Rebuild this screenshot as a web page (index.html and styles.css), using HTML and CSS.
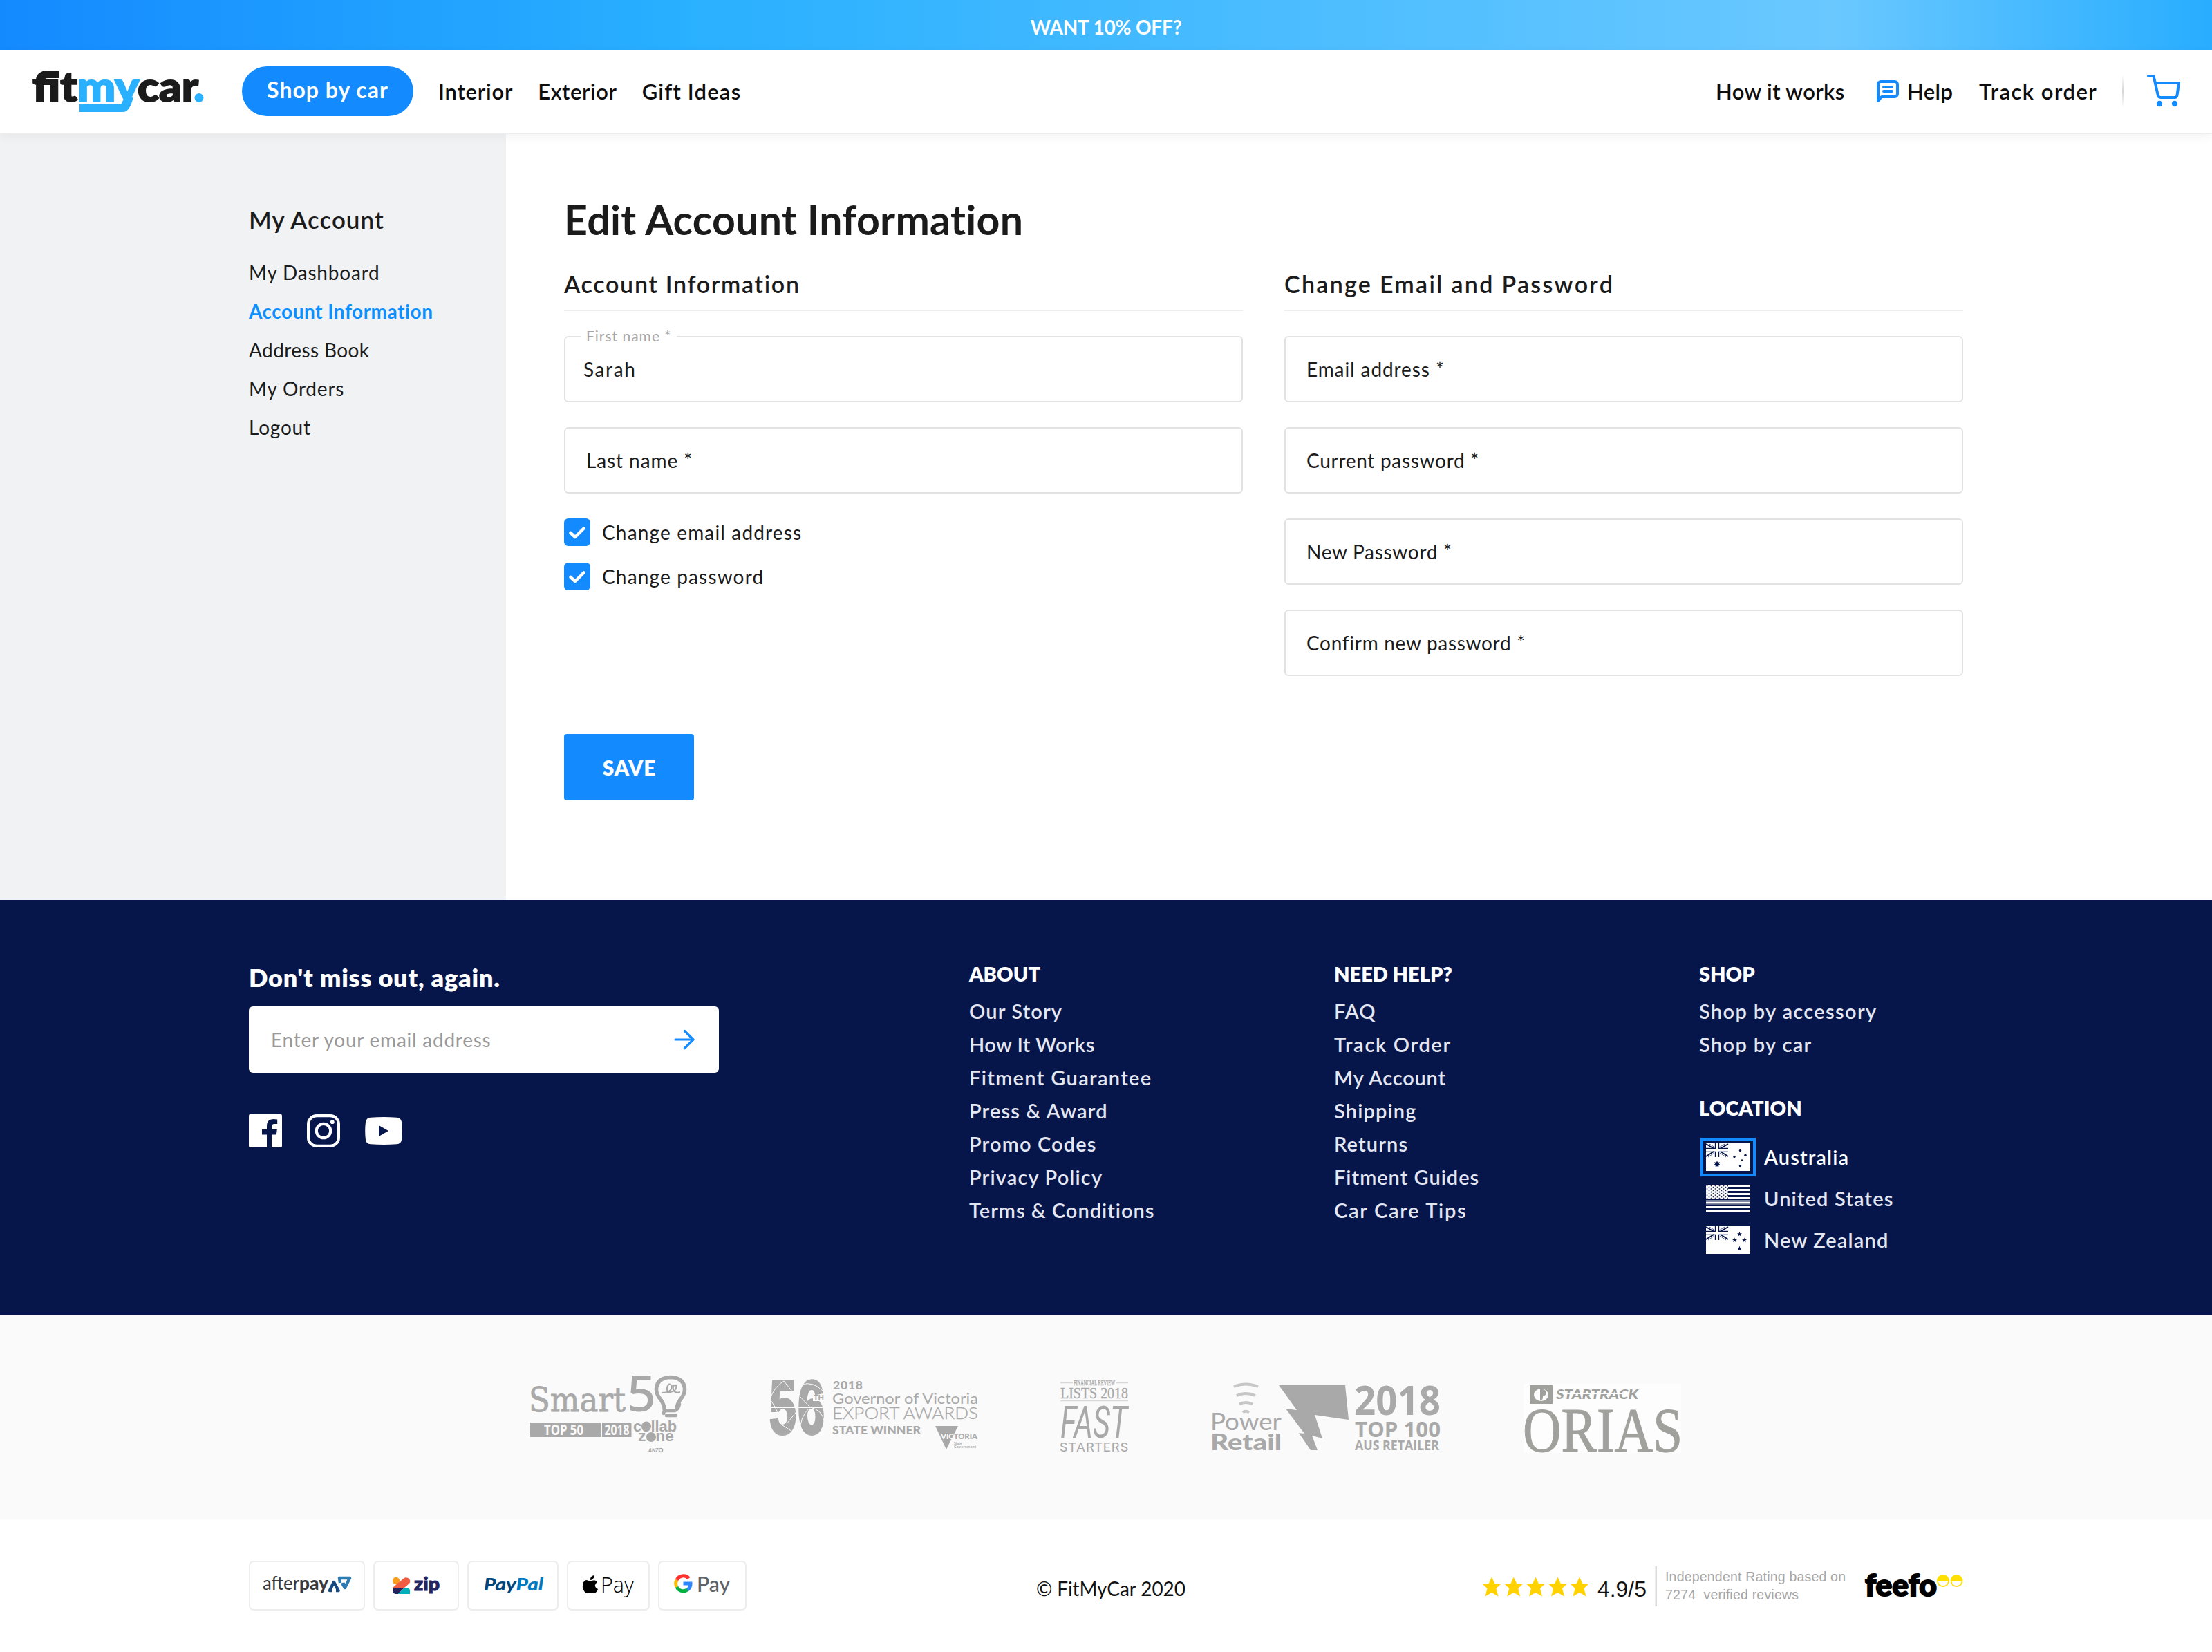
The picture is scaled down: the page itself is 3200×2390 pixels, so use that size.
FILE: index.html
```
<!DOCTYPE html>
<html lang="en">
<head>
<meta charset="utf-8">
<title>Edit Account Information | FitMyCar</title>
<link rel="stylesheet" href="styles.css">
</head>
<body>
<div class="promo">WANT 10% OFF?</div>

<header class="header">
  <svg class="logo" viewBox="40 84 264 96" role="img" aria-label="fitmycar">
    <g font-family="Lato, sans-serif" font-weight="900" font-size="59">
      <g fill="#1b1b1b" stroke="#1b1b1b" stroke-width="2">
        <text x="47" y="146.500" textLength="65" lengthAdjust="spacingAndGlyphs">fit</text>
        <text x="199" y="146.500" textLength="88" lengthAdjust="spacingAndGlyphs">car</text>
      </g>
      <text x="112" y="146.500" textLength="89" lengthAdjust="spacingAndGlyphs" fill="#29b0ff" stroke="#29b0ff" stroke-width="2">my</text>
    </g>
    <path d="M66 102H86V113H69Q64 113 64 117L56 112Q58 102 66 102Z" fill="#1b1b1b"/>
    <path d="M115 151H176Q178 150 179 147L193 140Q188 162 178 162H115Z" fill="#29b0ff"/>
    <circle cx="288" cy="141.500" r="6.500" fill="#29b0ff"/>
  </svg>
  <a class="pill">Shop by car</a>
  <nav class="nav">
    <a class="ls-8">Interior</a>
    <a class="ls-6">Exterior</a>
    <a class="ls-12">Gift Ideas</a>
  </nav>
  <nav class="nav-right">
    <a class="how ls-4">How it works</a>
    <a class="help ls-4">
      <svg width="32" height="32" viewBox="0 0 32 32" fill="none" stroke="#148aff" stroke-width="4" stroke-linejoin="round" stroke-linecap="round"><path d="M2 30V6a4 4 0 0 1 4-4H26a4 4 0 0 1 4 4V20a4 4 0 0 1-4 4H7Z"/><path d="M10 10H22M10 16H22"/></svg>
      Help</a>
    <a class="track">Track order</a>
    <span class="divider"></span>
    <svg class="cart" width="48" height="48" viewBox="0 0 48 48" fill="none" stroke="#148aff" stroke-width="4" stroke-linecap="round" stroke-linejoin="round"><path d="M2 2H9.500L16 30.500Q17 33 20 33H40Q43 33 43.500 30L46 12H12"/><g fill="#148aff" stroke="none"><circle cx="18" cy="42" r="4.200"/><circle cx="40" cy="42" r="4.200"/></g></svg>
  </nav>
</header>

<div class="page">
  <aside class="sidebar">
    <h2>My Account</h2>
    <a>My Dashboard</a>
    <a class="active">Account Information</a>
    <a class="ls-4">Address Book</a>
    <a>My Orders</a>
    <a>Logout</a>
  </aside>
  <main class="main">
    <h1>Edit Account Information</h1>
    <div class="columns">
      <section class="column">
        <h2 class="ls-17">Account Information</h2>
        <div class="field filled"><span class="float">First name *</span>Sarah</div>
        <div class="field">Last name *</div>
        <div class="checks">
          <label class="check"><span class="box"><svg width="38" height="40" viewBox="0 0 38 40" fill="none" stroke="#fff" stroke-width="4.500" stroke-linecap="round" stroke-linejoin="round"><path d="M9.500 21L16 27L28.500 14.500"/></svg></span>Change email address</label>
          <label class="check"><span class="box"><svg width="38" height="40" viewBox="0 0 38 40" fill="none" stroke="#fff" stroke-width="4.500" stroke-linecap="round" stroke-linejoin="round"><path d="M9.500 21L16 27L28.500 14.500"/></svg></span>Change password</label>
        </div>
      </section>
      <section class="column">
        <h2 class="ls-23">Change Email and Password</h2>
        <div class="field">Email address *</div>
        <div class="field ls-7">Current password *</div>
        <div class="field ls-7">New Password *</div>
        <div class="field ls-7">Confirm new password *</div>
      </section>
    </div>
    <button class="save">SAVE</button>
  </main>
</div>

<footer class="footer">
  <div class="newsletter">
    <h3>Don't miss out, again.</h3>
    <div class="subscribe"><span>Enter your email address</span>
      <svg width="30" height="30" viewBox="0 0 30 30" fill="none" stroke="#148aff" stroke-width="3.200" stroke-linecap="round" stroke-linejoin="round"><path d="M2 15H27M15.500 2.500L28 15L15.500 27.500"/></svg>
    </div>
    <div class="social">
      <svg width="48" height="48" viewBox="0 0 48 48"><path fill="#fff" d="M2 0H46Q48 0 48 2V46Q48 48 46 48H33V29.500H39.800L40.800 22H33V18Q33 14 37 14H41.200V7.400Q39 7 35.500 7Q26 7 26 17V22H19V29.500H26V48H2Q0 48 0 46V2Q0 0 2 0Z"/></svg>
      <svg width="48" height="48" viewBox="0 0 48 48" fill="none" stroke="#fff" stroke-width="4.200"><rect x="2.100" y="2.100" width="43.800" height="43.800" rx="12"/><circle cx="24" cy="24" r="10.200"/><circle cx="36.800" cy="11.200" r="2.900" fill="#fff" stroke="none"/></svg>
      <svg width="54" height="48" viewBox="0 0 54 48"><path fill="#fff" fill-rule="evenodd" d="M8 4.700Q27 3.300 46 4.700Q52 5.200 53 11Q54.600 24 53 37Q52 42.800 46 43.300Q27 44.700 8 43.300Q2 42.800 1 37Q-0.600 24 1 11Q2 5.200 8 4.700ZM20 16V32L34 24Z"/></svg>
    </div>
  </div>
  <div class="links">
    <h4>ABOUT</h4>
    <a>Our Story</a><a class="ls-4">How It Works</a><a class="ls-14">Fitment Guarantee</a><a>Press &amp; Award</a><a>Promo Codes</a><a>Privacy Policy</a><a class="ls-10">Terms &amp; Conditions</a>
  </div>
  <div class="links">
    <h4>NEED HELP?</h4>
    <a>FAQ</a><a class="ls-17">Track Order</a><a class="ls-8">My Account</a><a>Shipping</a><a>Returns</a><a class="ls-10">Fitment Guides</a><a class="ls-17">Car Care Tips</a>
  </div>
  <div class="links">
    <h4>SHOP</h4>
    <a class="ls-14">Shop by accessory</a><a class="ls-14">Shop by car</a>
    <h4 class="location">LOCATION</h4>
    <div class="country current">
      <span class="flag"><svg width="64" height="40" viewBox="0 0 64 40"><rect width="64" height="40" fill="#fff"/>
        <g id="jack" stroke="#06164b" fill="none"><path stroke-width="1.800" d="M0 1L12 8M32 1L20 8M0 19L11 12M32 19L21 12"/><path stroke-width=".7" d="M4 .5L13 6M28 .5L19 6M3 20L12 14M29 20L20 14"/><path stroke-width="1.300" d="M0 7.500H13.500V0M18.500 0V7.500H32M0 12.300H13.500V20M18.500 20V12.300H32"/></g>
        <g fill="#06164b"><path d="M16 25.500L17.300 28L20 27.300L18.800 29.800L21 31.500L18.300 32L18.200 34.700L16 33L13.800 34.700L13.700 32L11 31.500L13.200 29.800L12 27.300L14.700 28Z"/><circle cx="49.500" cy="10.500" r="1.700"/><circle cx="41" cy="19.500" r="1.700"/><circle cx="57" cy="17.200" r="1.700"/><circle cx="52" cy="24.400" r="1.200"/><circle cx="49.500" cy="32.700" r="1.700"/></g></svg></span>
      Australia</div>
    <div class="country">
      <span class="flag"><svg width="64" height="40" viewBox="0 0 64 40">
        <defs><pattern id="stars" width="6" height="4.600" patternUnits="userSpaceOnUse"><circle cx="1.500" cy="1.300" r=".95" fill="#06164b"/><circle cx="4.500" cy="3.600" r=".95" fill="#06164b"/></pattern></defs>
        <path fill="#fff" d="M0 0H64V3H0ZM0 6H64V9H0ZM0 12H64V15H0ZM0 18H64V21H0ZM0 24.500H64V27.500H0ZM0 31H64V34H0ZM0 37H64V40H0Z"/><path fill="#fff" opacity=".45" d="M0 22H64V23.200H0ZM0 28.300H64V29.500H0Z"/><rect width="32" height="21" fill="#fff"/><rect width="32" height="20.500" fill="url(#stars)"/></svg></span>
      United States</div>
    <div class="country">
      <span class="flag"><svg width="64" height="40" viewBox="0 0 64 40"><rect width="64" height="40" fill="#fff"/><use href="#jack"/>
        <g fill="#06164b"><path id="star" d="M48.500 7.800L49.300 10.300H52L49.900 11.900L50.700 14.500L48.500 12.900L46.300 14.500L47.100 11.900L45 10.300H47.700Z"/><use href="#star" x="-7" y="8.800"/><use href="#star" x="7" y="8.800"/><use href="#star" y="20.800"/></g></svg></span>
      New Zealand</div>
  </div>
</footer>

<section class="awards">
  <svg width="232" height="120" viewBox="764 1985 232 120" fill="#a9a9a9" role="img" aria-label="Smart50">
    <text x="765" y="2042" font-family="DejaVu Serif, serif" font-size="49" stroke="#a9a9a9" stroke-width=".8" textLength="140" lengthAdjust="spacingAndGlyphs">Smart</text>
    <text x="907" y="2041.500" font-family="Noto Sans, sans-serif" font-weight="500" font-size="72" textLength="42" lengthAdjust="spacingAndGlyphs">5</text>
    <path fill="none" stroke="#a9a9a9" stroke-width="5.500" d="M961 2041Q962 2034 956 2025Q949 2017 949.500 2009Q951 1993 970 1992.500Q989 1993 990.500 2009Q991 2017 984 2025Q978 2034 979 2040"/>
    <path fill="none" stroke="#a9a9a9" stroke-width="2" d="M957 2015Q972 2015 972 2005Q968 1999 965 2007Q964 2015 970 2014Q980 2012 978 2004Q973 2002 974 2012Q978 2016 984 2014"/>
    <path fill="none" stroke="#a9a9a9" stroke-width="4.500" stroke-linecap="round" d="M960 2045Q960 2041 964 2041H976Q982 2039 983 2031M964 2048H978"/>
    <path d="M767 2058H869.500V2079H767ZM871 2058H913.500V2079H871Z"/>
    <g fill="#fafafa" font-family="Open Sans, sans-serif" font-weight="700" font-size="22"><text x="787" y="2076" textLength="57" lengthAdjust="spacingAndGlyphs">TOP 50</text><text x="874.500" y="2076" textLength="36" lengthAdjust="spacingAndGlyphs">2018</text></g>
    <g font-family="Liberation Sans, sans-serif" font-weight="700" font-size="22"><text x="916" y="2071" textLength="63" lengthAdjust="spacingAndGlyphs">collab</text><text x="923" y="2085" textLength="52" lengthAdjust="spacingAndGlyphs">zone</text></g>
    <circle cx="935" cy="2063.500" r="7"/><circle cx="942" cy="2079" r="7"/>
    <text x="938" y="2101" font-family="Lato, sans-serif" font-weight="900" font-style="italic" font-size="7.500">ANZ</text>
    <circle cx="956" cy="2098" r="2.500" fill="none" stroke="#a9a9a9" stroke-width="1.600"/>
  </svg>
  <svg width="304" height="120" viewBox="1112 1985 304 120" fill="#a9a9a9" role="img" aria-label="Governor of Victoria Export Awards">
    <g font-family="Liberation Sans, sans-serif" font-weight="700" font-size="109" stroke="#a9a9a9" stroke-width="4"><text x="1113" y="2074" textLength="39" lengthAdjust="spacingAndGlyphs">5</text><text x="1154" y="2074" textLength="39" lengthAdjust="spacingAndGlyphs">6</text></g>
    <g fill="none" stroke="#fafafa" stroke-width="1"><path d="M1112 2036.500H1192M1114 2024Q1120 2006 1134 1998L1150 2018M1114 2024L1122 2037L1132 2062L1148 2072M1138 2060L1154 2040M1155 2018L1172 2036Q1156 2050 1158 2072M1172 2036Q1190 2040 1192 2056M1160 2003Q1176 1998 1190 2012"/></g>
    <rect x="1176" y="2018" width="17" height="9" fill="#fafafa"/>
    <text x="1177" y="2026" font-family="Lato, sans-serif" font-weight="900" font-size="11" textLength="15" lengthAdjust="spacingAndGlyphs">TH</text>
    <g font-family="Lato, sans-serif">
      <text x="1205" y="2010" font-weight="900" font-size="17.500" textLength="43">2018</text>
      <text x="1204" y="2031" font-weight="400" font-size="20.500" textLength="211" lengthAdjust="spacingAndGlyphs">Governor of Victoria</text>
      <text x="1204" y="2053" font-weight="300" font-size="22.500" textLength="211" lengthAdjust="spacingAndGlyphs" stroke="#a9a9a9" stroke-width=".3">EXPORT AWARDS</text>
      <text x="1204" y="2075" font-weight="900" font-size="17.500" textLength="128" lengthAdjust="spacingAndGlyphs">STATE WINNER</text>
      <path d="M1353 2063H1386L1369 2097Z"/>
      <text x="1361" y="2082" font-weight="900" font-size="11" textLength="53" lengthAdjust="spacingAndGlyphs"><tspan fill="#fafafa">VIC</tspan>TORIA</text>
      <text x="1380" y="2089.500" font-size="5" font-weight="700">State</text><text x="1380" y="2095" font-size="5" font-weight="700" textLength="32">Government</text>
    </g>
  </svg>
  <svg width="102" height="120" viewBox="1532 1985 102 120" fill="#a9a9a9" role="img" aria-label="Fast Starters">
    <path stroke="#d8d8d8" stroke-width="1.500" d="M1534 2000.500H1552M1614 2000.500H1632M1534 2026.500H1632"/>
    <g font-family="Liberation Serif, serif" stroke="#a9a9a9" stroke-width=".4"><text x="1553" y="2004" font-size="11" textLength="60" lengthAdjust="spacingAndGlyphs">FINANCIAL REVIEW</text><text x="1534" y="2022.500" font-size="24" textLength="98" lengthAdjust="spacingAndGlyphs">LISTS 2018</text></g>
    <text x="1534" y="2080" font-family="Roboto, sans-serif" font-style="italic" font-weight="400" font-size="65" textLength="97" lengthAdjust="spacingAndGlyphs">FAST</text>
    <text x="1533" y="2099.500" font-family="Roboto, sans-serif" font-weight="400" font-size="19" textLength="99">STARTERS</text>
  </svg>
  <svg width="336" height="120" viewBox="1750 1985 336 120" fill="#a9a9a9" role="img" aria-label="Power Retail Top 100">
    <path fill="none" stroke="#c6c6c6" stroke-width="4" d="M1785 2006Q1802 1999 1820 2006M1789 2019Q1802 2013 1816 2019M1793 2031.500Q1802 2026.500 1812 2031.500M1798 2043.500Q1802 2040 1807 2043.500"/>
    <g font-family="Lato, sans-serif"><text x="1751" y="2069" font-weight="400" font-size="34" textLength="103" lengthAdjust="spacingAndGlyphs">Power</text><text x="1751" y="2098" font-weight="900" font-size="33" textLength="103" lengthAdjust="spacingAndGlyphs">Retail</text></g>
    <path d="M1850 2004H1946L1951 2054L1902 2047L1913 2081L1898 2077L1906 2098H1896L1879 2073L1887 2074L1860 2038L1876 2040Z"/>
    <g font-family="Open Sans, sans-serif" font-weight="700"><text x="1959" y="2046.500" font-size="59" textLength="125" lengthAdjust="spacingAndGlyphs">2018</text><text x="1960" y="2079" font-size="31" textLength="124" lengthAdjust="spacingAndGlyphs">TOP 100</text><text x="1960" y="2098" font-size="19" textLength="122" lengthAdjust="spacingAndGlyphs">AUS RETAILER</text></g>
  </svg>
  <svg width="232" height="120" viewBox="2202 1985 232 120" fill="#a0a09d" role="img" aria-label="StarTrack ORIAS">
    <rect x="2204" y="2002" width="228" height="100" fill="#fdfdfd"/>
    <rect x="2213" y="2004" width="33" height="27"/><ellipse cx="2229.500" cy="2018" rx="10.500" ry="9" fill="#fdfdfd"/>
    <path d="M2228 2010V2026Q2232 2027 2232 2020Q2239 2018 2236 2012Q2233 2009 2228 2010Z"/>
    <text x="2251" y="2023.500" font-family="Lato, sans-serif" font-weight="900" font-style="italic" font-size="18" textLength="119" lengthAdjust="spacingAndGlyphs">STARTRACK</text>
    <path stroke="#fdfdfd" stroke-width="1" d="M2262 2016.500H2352"/>
    <text x="2203" y="2099.500" font-family="Liberation Serif, serif" font-size="92" stroke="#a0a09d" stroke-width="1" textLength="231" lengthAdjust="spacingAndGlyphs">ORIAS</text>
  </svg>
</section>

<section class="bottom">
  <div class="pay">
    <span class="card afterpay"><svg viewBox="362 2260 164 68"><g font-family="Lato, sans-serif" font-size="27" fill="#3a3a3c"><text x="380" y="2300" textLength="53" lengthAdjust="spacingAndGlyphs">after</text><text x="433" y="2300" font-weight="900" textLength="42" lengthAdjust="spacingAndGlyphs">pay</text></g><path fill="none" stroke="#174a80" stroke-width="4.500" stroke-linejoin="round" d="M480 2301H477L483 2289L489.500 2301H486"/><path fill="none" stroke="#2c7bb3" stroke-width="4.500" stroke-linejoin="round" d="M492 2290L491 2283H506L499 2297L496 2292H499"/></svg></span>
    <span class="card zip"><svg viewBox="542 2260 120 68"><circle cx="573" cy="2287" r="5.200" fill="#fa9c1d"/><path d="M568 2297L584 2283.500Q588 2281 592 2284Q594.500 2288 592 2291L585 2297Z" fill="#f25c42"/><path d="M572 2297H585L576 2306H572Q568 2305 568 2301Q568 2297 572 2297Z" fill="#22255f"/><path d="M585 2297H589Q593 2298 593 2301V2306H576Z" fill="#00b0b9"/><text x="599" y="2301" font-family="Lato, sans-serif" font-weight="900" font-size="27" fill="#22255f" stroke="#22255f" textLength="37" lengthAdjust="spacingAndGlyphs">zip</text></svg></span>
    <span class="card paypal"><svg viewBox="678 2260 128 68"><text x="700" y="2301" font-family="Lato, sans-serif" font-weight="900" font-style="italic" font-size="25.500" fill="#00457c" textLength="86" lengthAdjust="spacingAndGlyphs">Pay<tspan fill="#0079c1">Pal</tspan></text></svg></span>
    <span class="card apple"><svg viewBox="822 2260 116 68"><path d="M859.500 2279Q860 2285 854 2286Q853.500 2280 859.500 2279ZM854 2288Q861 2284 864 2289Q857 2294 865 2299Q862 2306 858.500 2305Q854 2303 850 2305Q846 2306 843 2297Q842 2288 848 2286Q850 2286 854 2288Z"/><text x="869" y="2303.500" font-family="Open Sans, sans-serif" font-weight="300" font-size="31" textLength="48" lengthAdjust="spacingAndGlyphs">Pay</text></svg></span>
    <span class="card google"><svg viewBox="954 2260 124 68"><g fill="none" stroke-width="5"><path stroke="#ff302f" d="M979 2286A10.500 10.500 0 0 1 996.500 2283.500"/><path stroke="#fbbc05" d="M979 2286A10.500 10.500 0 0 0 979 2296"/><path stroke="#00b140" d="M979 2296A10.500 10.500 0 0 0 995 2299.500"/><path stroke="#3086ff" d="M994.500 2300A10.500 10.500 0 0 0 999 2291H988.500"/></g><text x="1008" y="2303" font-family="Lato, sans-serif" font-weight="500" font-size="31" fill="#5f6368" textLength="48" lengthAdjust="spacingAndGlyphs">Pay</text></svg></span>
  </div>
  <p class="copyright">© FitMyCar 2020</p>
  <svg class="rating" width="700" height="72" viewBox="2140 2258 700 72">
    <g fill="#ffd200"><path id="rate" d="M2158 2281.500L2162.300 2291H2172L2164.500 2298L2167.500 2309.500L2158 2304L2148.500 2309.500L2151.500 2298L2144 2291H2153.700Z"/><use href="#rate" x="31.800"/><use href="#rate" x="63.500"/><use href="#rate" x="95.500"/><use href="#rate" x="127"/></g>
    <g font-family="Liberation Sans, sans-serif"><text x="2311" y="2310" font-size="31" fill="#111" textLength="71" lengthAdjust="spacingAndGlyphs">4.9/5</text>
    <g font-size="19.500" fill="#a6a6a6"><text x="2409" y="2287.500" textLength="261">Independent Rating based on</text><text x="2409" y="2314" textLength="193">7274&nbsp; verified reviews</text></g></g>
    <rect x="2394.500" y="2266" width="2.500" height="58" fill="#dcdcdc"/>
    <text x="2698" y="2309" font-family="Lato, sans-serif" font-weight="900" font-size="43" stroke="#000" stroke-width="2" textLength="104" lengthAdjust="spacingAndGlyphs">feefo</text>
    <g fill="#ffdf00"><circle cx="2811" cy="2287" r="9"/><circle cx="2830.500" cy="2287" r="9"/></g>
    <path fill="#fff" d="M2804 2288H2818Q2817 2294 2811 2294Q2805 2294 2804 2288ZM2823.500 2288H2837.500Q2836.500 2294 2830.500 2294Q2824.500 2294 2823.500 2288Z"/>
  </svg>
</section>
</body>
</html>
```
FILE: styles.css
```
* { box-sizing: border-box; }
body, h1, h2, h3, h4, p { margin: 0; }
body {
  width: 3200px;
  background: #fff;
  color: #1b1b1b;
  font: 400 28px/56px Lato, sans-serif;
}
svg { display: block; flex: none; }

.promo {
  height: 72px;
  padding-top: 5px;
  background: linear-gradient(90deg, #148aff 0%, #29b0ff 31%, #6ac8ff 83%, #28adff 100%);
  color: #fff;
  font-weight: 700;
  line-height: 68px;
  letter-spacing: -.2px;
  text-align: center;
}

.header {
  position: relative;
  display: flex;
  align-items: center;
  height: 122px;
  padding: 0 46px 0 40px;
  border-bottom: 2px solid #eeeeef;
  background: #fff;
  box-shadow: 0 4px 14px rgba(0, 0, 0, .05);
  color: #0d0d0d;
  font-size: 31px;
  font-weight: 600;
}
.logo { width: 264px; height: 96px; }
.pill {
  width: 248px;
  height: 72px;
  margin-left: 46px;
  border-radius: 36px;
  background: #148aff;
  color: #fff;
  font-size: 32px;
  font-weight: 700;
  line-height: 68px;
  letter-spacing: 1px;
  text-align: center;
}
.nav { display: flex; gap: 36px; margin-left: 36px; }
.nav-right { display: flex; align-items: center; margin-left: auto; }
.how { width: 233px; }
.help { display: flex; align-items: center; gap: 12px; width: 148px; }
.track { width: 172px; letter-spacing: 1.5px; white-space: nowrap; }
.divider {
  width: 2px;
  height: 48px;
  margin: 0 34px 0 35px;
  background: linear-gradient(#fff, #d6d6d6, #fff);
}

.page { display: grid; grid-template-columns: 732px 1fr; height: 1108px; }
.sidebar {
  display: flex;
  flex-direction: column;
  padding: 101px 0 0 360px;
  background: #f0f2f4;
  letter-spacing: .8px;
}
.sidebar h2 { margin-bottom: 27px; font-size: 35px; font-weight: 600; line-height: 44px; letter-spacing: 1px; }
.sidebar .active { color: #0c8fff; font-weight: 700; letter-spacing: .5px; }

.main { padding: 88px 360px 0 84px; }
h1 { font-size: 59px; font-weight: 700; line-height: 72px; letter-spacing: .3px; }
.columns { display: grid; grid-template-columns: 982px 982px; gap: 60px; margin-top: 33px; }
.column { display: flex; flex-direction: column; gap: 36px; }
.column h2 {
  height: 63px;
  border-bottom: 2px solid #ededed;
  font-size: 34px;
  font-weight: 600;
  line-height: 48px;
}
.field {
  position: relative;
  height: 96px;
  padding-left: 30px;
  border: 2px solid #e2e2e2;
  border-radius: 6px;
  line-height: 92px;
  letter-spacing: .9px;
}
.filled { padding-left: 26px; letter-spacing: 1.6px; }
.float {
  position: absolute;
  top: -20px;
  left: 22px;
  padding: 0 8px;
  background: #fff;
  color: #a6a6a6;
  font-size: 21px;
  line-height: 36px;
  letter-spacing: 1px;
}
.checks { display: flex; flex-direction: column; gap: 24px; }
.check { display: flex; align-items: center; gap: 17px; height: 40px; letter-spacing: 1.15px; }
.box { width: 38px; height: 40px; border-radius: 6px; background: #148aff; }
.save {
  display: block;
  width: 188px;
  height: 96px;
  margin-top: 84px;
  padding: 0 0 0 1px;
  border: 0;
  border-radius: 4px;
  background: #148aff;
  color: #fff;
  font: 800 30px/96px Lato, sans-serif;
  letter-spacing: .8px;
}

.footer {
  display: grid;
  grid-template-columns: 1042px 528px 528px 1fr;
  height: 600px;
  padding: 83px 340px 0 360px;
  background: #06164b;
  color: #fff;
}
.newsletter { padding-top: 7px; }
.newsletter h3 { font-size: 36px; font-weight: 800; line-height: 44px; letter-spacing: .8px; }
.subscribe {
  display: flex;
  align-items: center;
  justify-content: space-between;
  width: 680px;
  height: 96px;
  margin-top: 20px;
  padding: 0 35px 0 32px;
  border-radius: 6px;
  background: #fff;
  color: #999;
  letter-spacing: .75px;
}
.social { display: flex; gap: 36px; margin-top: 60px; }
.links { display: flex; flex-direction: column; font-size: 29px; line-height: 48px; }
.links h4 { margin-bottom: 6px; font-size: 29px; font-weight: 800; letter-spacing: 0; }
.links a, .country { color: #e4e7f1; font-weight: 600; letter-spacing: 1.15px; }
.links .location { margin: 44px 0 17px; }
.country { display: flex; align-items: center; gap: 12px; height: 60px; margin-left: 2px; }
.flag { padding: 4px; border: 4px solid transparent; }
.current { color: #fff; }
.current .flag { border-color: #148aff; }

.awards {
  display: flex;
  gap: 116px;
  height: 296px;
  padding: 83px 0 0 764px;
  background: #fafafa;
}

.bottom { display: flex; height: 192px; padding: 60px 360px 0; }
.pay { display: flex; gap: 12px; }
.card { height: 72px; border: 2px solid #ededed; border-radius: 7px; }
.card svg { width: 100%; height: 68px; }
.afterpay { width: 168px; }
.zip { width: 124px; }
.paypal { width: 132px; }
.apple { width: 120px; }
.google { width: 128px; }
.copyright { margin-left: 419px; padding-top: 7px; line-height: 66px; letter-spacing: -.1px; color: #111; }
.rating { margin-left: auto; }

/* tracking steps */
.ls-4, .links .ls-4, .sidebar .ls-4 { letter-spacing: .4px; }
.ls-6 { letter-spacing: .6px; }
.ls-7 { letter-spacing: .7px; }
.ls-8, .links .ls-8 { letter-spacing: .8px; }
.links .ls-10 { letter-spacing: 1px; }
.ls-12 { letter-spacing: 1.2px; }
.links .ls-14 { letter-spacing: 1.35px; }
.ls-17, .links .ls-17 { letter-spacing: 1.7px; }
.ls-23 { letter-spacing: 2.3px; }
```
